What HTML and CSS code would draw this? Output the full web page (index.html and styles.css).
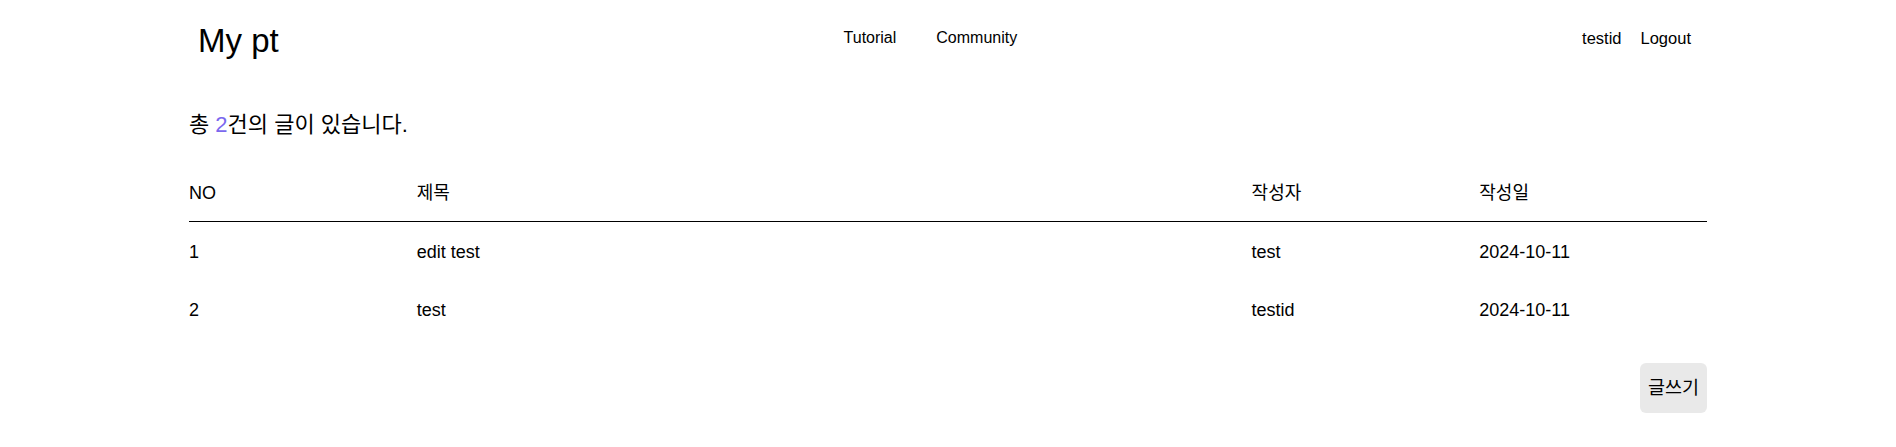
FILE: index.html
```html
<!DOCTYPE html>
<html lang="ko">
<head>
<meta charset="utf-8">
<title>My pt</title>
<link rel="stylesheet" href="styles.css">
</head>
<body>
<header class="site-header">
  <a class="brand" href="#">My pt</a>
  <nav class="main-nav">
    <a href="#">Tutorial</a>
    <a href="#">Community</a>
  </nav>
  <div class="user-nav">
    <a href="#">testid</a>
    <a href="#">Logout</a>
  </div>
</header>
<main class="board">
  <p class="count">총 <span class="count-num">2</span>건의 글이 있습니다.</p>
  <table class="post-table">
    <colgroup>
      <col class="col-no"><col class="col-title"><col class="col-writer"><col class="col-date">
    </colgroup>
    <thead>
      <tr><th>NO</th><th>제목</th><th>작성자</th><th>작성일</th></tr>
    </thead>
    <tbody>
      <tr><td>1</td><td>edit test</td><td>test</td><td>2024-10-11</td></tr>
      <tr><td>2</td><td>test</td><td>testid</td><td>2024-10-11</td></tr>
    </tbody>
  </table>
  <div class="actions">
    <button class="write-btn" type="button">글쓰기</button>
  </div>
</main>
</body>
</html>
```
FILE: styles.css
```css
* { box-sizing: border-box; }
body {
  margin: 0;
  background: #fff;
  color: #000;
  font-family: "Liberation Sans", "Noto Sans CJK KR", sans-serif;
  font-size: 16px;
}
a { color: inherit; text-decoration: none; }

.site-header {
  width: 1518px;
  height: 82px;
  margin: 0 auto;
  padding: 21px 16px 0 9px;
  display: flex;
  justify-content: space-between;
  align-items: flex-start;
}
.brand { font-size: 33px; line-height: 40px; }
.main-nav,
.user-nav {
  display: flex;
  font-size: 16px;
  line-height: 20px;
  padding-top: 7px;
}
.main-nav { gap: 40px; }
.user-nav { gap: 19px; font-size: 16.5px; }

.board { width: 1518px; margin: 0 auto; }
.count {
  margin: 30px 0 0;
  font-size: 22px;
  line-height: 26px;
}
.count-num { color: #7b68ee; }

.post-table {
  width: 100%;
  border-collapse: separate;
  border-spacing: 0;
  margin-top: 26px;
  table-layout: fixed;
}
.col-no { width: 15%; }
.col-title { width: 55%; }
.col-writer { width: 15%; }
.col-date { width: 15%; }
.post-table th,
.post-table td {
  text-align: left;
  font-weight: normal;
  font-size: 18px;
  line-height: 22px;
  vertical-align: top;
}
.post-table th {
  padding: 18px 0 17px;
  border-bottom: 1px solid #000;
}
.post-table td { padding: 19px 0 17px; }

.actions { display: flex; justify-content: flex-end; margin-top: 25px; }
.write-btn {
  font-family: inherit;
  font-size: 18.5px;
  line-height: 24px;
  padding: 13px 8px;
  background: #e9e9e9;
  border: none;
  border-radius: 6px;
  color: #000;
}
```
